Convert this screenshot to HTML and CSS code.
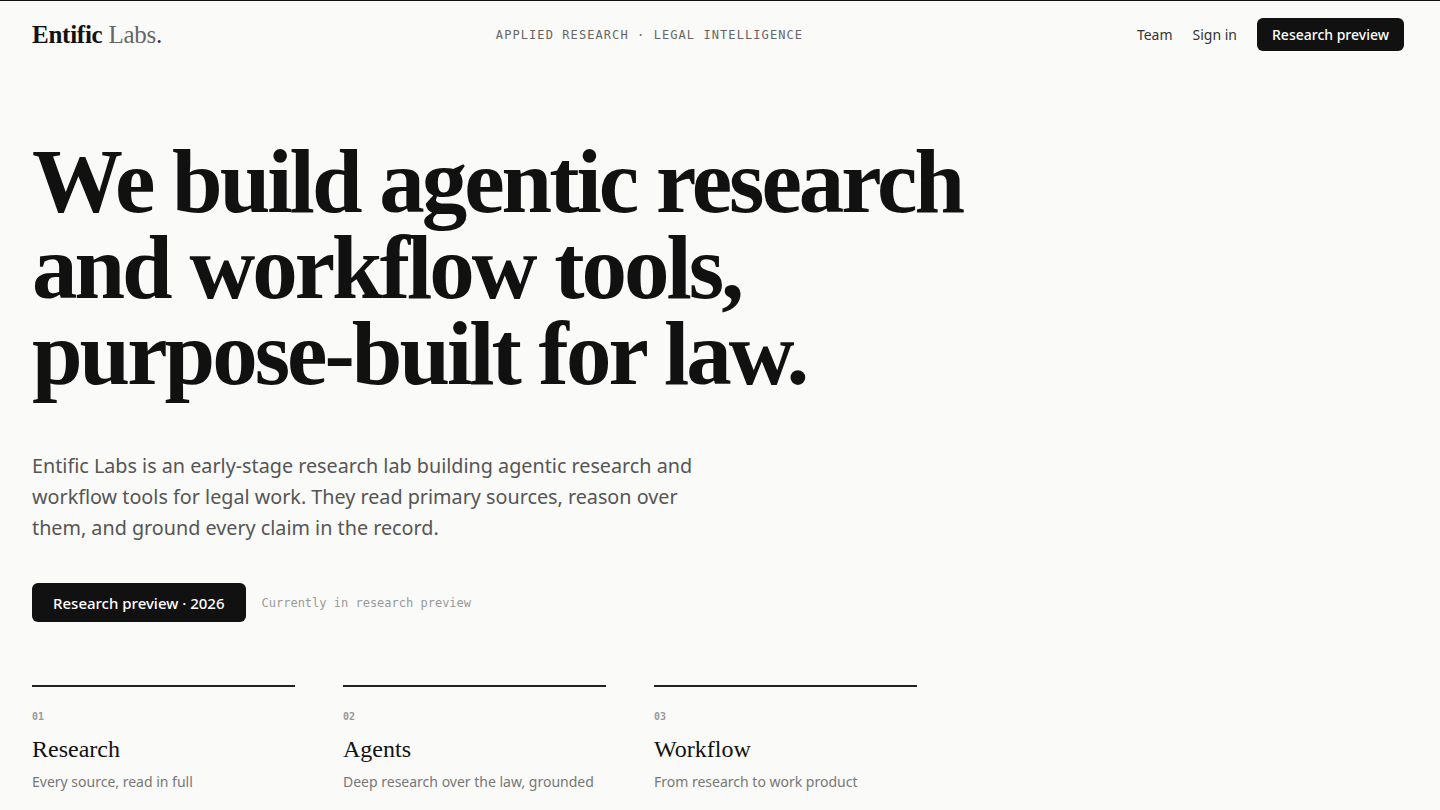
FILE: index.html
```html
<!DOCTYPE html>
<html lang="en">
<head>
<meta charset="utf-8">
<title>Entific Labs</title>
<link rel="stylesheet" href="styles.css">
</head>
<body>
<div class="page">
  <header class="topbar">
    <a class="logo" href="#"><span class="logo-main">Entific</span> <span class="logo-sub">Labs</span><span class="logo-dot">.</span></a>
    <div class="tagline">APPLIED RESEARCH · LEGAL INTELLIGENCE</div>
    <nav class="nav">
      <a class="nav-link" href="#">Team</a>
      <a class="nav-link" href="#">Sign in</a>
      <a class="btn btn-small" href="#">Research preview</a>
    </nav>
  </header>

  <main class="hero">
    <h1 class="headline">We build agentic research<br>and workflow tools,<br>purpose-built for law.</h1>
    <p class="lede">Entific Labs is an early-stage research lab building agentic research and workflow tools for legal work. They read primary sources, reason over them, and ground every claim in the record.</p>
    <div class="cta-row">
      <a class="btn btn-large" href="#">Research preview · 2026</a>
      <span class="cta-note">Currently in research preview</span>
    </div>

    <section class="features">
      <div class="feature">
        <div class="feature-num">01</div>
        <h2 class="feature-title">Research</h2>
        <p class="feature-desc">Every source, read in full</p>
      </div>
      <div class="feature">
        <div class="feature-num">02</div>
        <h2 class="feature-title">Agents</h2>
        <p class="feature-desc">Deep research over the law, grounded</p>
      </div>
      <div class="feature">
        <div class="feature-num">03</div>
        <h2 class="feature-title">Workflow</h2>
        <p class="feature-desc">From research to work product</p>
      </div>
    </section>
  </main>
</div>
</body>
</html>
```

FILE: styles.css
```css
* { box-sizing: border-box; }
html, body { margin: 0; padding: 0; }
body {
  background: #fafaf8;
  color: #111;
  font-family: "Noto Sans", "Open Sans", sans-serif;
  border-top: 1px solid #111;
  height: 810px;
  overflow: hidden;
}
a { text-decoration: none; color: inherit; }

.page {
  padding: 0 36px 0 32px;
}

.topbar {
  display: flex;
  justify-content: space-between;
  align-items: center;
  height: 67px;
}
.logo {
  font-family: "Liberation Serif", "DejaVu Serif", serif;
  font-size: 25px;
  letter-spacing: -0.01em;
}
.logo-main { font-weight: 700; color: #111; }
.logo-sub { color: #666; }
.logo-dot { color: #1f2f6b; }

.tagline {
  font-family: "DejaVu Sans Mono", "Liberation Mono", monospace;
  font-size: 12px;
  letter-spacing: 0.09em;
  color: #666;
}

.nav {
  display: flex;
  align-items: center;
  gap: 20px;
}
.nav-link {
  font-size: 14px;
  color: #333;
}
.btn {
  background: #111;
  color: #fff;
  border-radius: 6px;
  font-weight: 500;
}
.btn-small {
  font-size: 14px;
  padding: 7px 15px;
  line-height: 19px;
}

.hero { padding-top: 71px; }

.headline {
  font-family: "Liberation Serif", "DejaVu Serif", serif;
  font-weight: 700;
  font-size: 91px;
  line-height: 86px;
  letter-spacing: -0.033em;
  margin: 0;
  color: #111;
}

.lede {
  margin: 53px 0 0;
  max-width: 680px;
  font-size: 19.75px;
  line-height: 31px;
  color: #555;
}

.cta-row {
  margin-top: 40px;
  display: flex;
  align-items: center;
  gap: 16px;
}
.btn-large {
  font-size: 15px;
  line-height: 20px;
  padding: 10px 21px 9px;
}
.cta-note {
  font-family: "DejaVu Sans Mono", "Liberation Mono", monospace;
  font-size: 12px;
  color: #999;
}

.features {
  margin-top: 63px;
  display: grid;
  grid-template-columns: repeat(3, 263px);
  gap: 48px;
}
.feature {
  border-top: 2px solid #222;
  padding-top: 24px;
}
.feature-num {
  font-family: "DejaVu Sans Mono", "Liberation Mono", monospace;
  font-size: 10px;
  font-weight: 700;
  color: #999;
}
.feature-title {
  font-family: "Liberation Serif", "DejaVu Serif", serif;
  font-weight: 400;
  font-size: 24px;
  line-height: 30px;
  margin: 12px 0 0;
  color: #111;
}
.feature-desc {
  margin: 8px 0 0;
  font-size: 14px;
  color: #777;
}
```
